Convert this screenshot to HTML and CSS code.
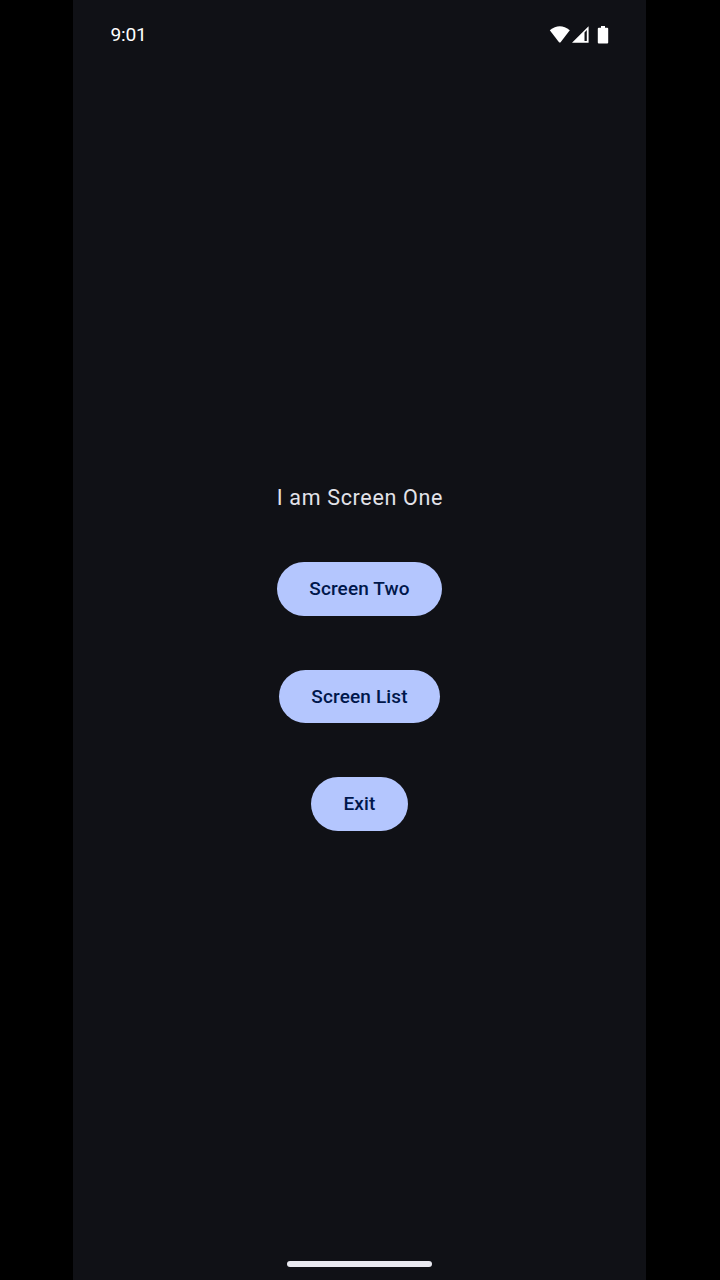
FILE: index.html
```html
<!DOCTYPE html>
<html lang="en">
<head>
  <meta charset="utf-8">
  <title>Screen One</title>
  <link rel="stylesheet" href="styles.css">
</head>
<body>
  <div class="screen">
    <header class="status-bar">
      <span class="clock">9:01</span>
      <svg class="status-icons" width="60" height="20" viewBox="0 0 60 20" fill="currentColor" aria-hidden="true">
        <path d="M-0.2 5.2 Q9.8 -2.8 19.8 5.2 L10.6 17.2 Q9.8 18 9 17.2 Z"/>
        <path fill-rule="evenodd" d="M38.6 1.3 V17.8 H22 Z M34.5 7.4 V16 H36.8 V5.1 Z"/>
        <path d="M51 1 h4 v1.7 h2.2 q1 0 1 1 v13.7 q0 1 -1 1 h-8.4 q-1 0 -1 -1 v-13.7 q0 -1 1 -1 h2.2 z"/>
      </svg>
    </header>
    <main class="content">
      <p class="title">I am Screen One</p>
      <button class="button">Screen Two</button>
      <button class="button">Screen List</button>
      <button class="button">Exit</button>
    </main>
    <footer class="navigation"><div class="home-handle"></div></footer>
  </div>
</body>
</html>
```
FILE: styles.css
```css
* {
  box-sizing: border-box;
}

body {
  margin: 0;
  background: #000;
  font-family: Roboto, sans-serif;
}

.screen {
  display: flex;
  flex-direction: column;
  width: 573px;
  height: 1280px;
  margin-left: 73px;
  background: #101116;
}

.status-bar {
  display: flex;
  justify-content: space-between;
  height: 70px;
  padding: 25px 36px 0 37.5px;
  color: #fff;
}

.status-icons {
  overflow: visible;
}

.clock {
  font-size: 19.2px;
  line-height: 20px;
  letter-spacing: -0.25px;
}

.content {
  display: flex;
  flex: 1;
  flex-direction: column;
  align-items: center;
  gap: 53.7px;
  padding-top: 411.8px;
}

.title {
  margin: 0 0 -5.4px;
  padding-left: 1px;
  color: #e2e2e9;
  font-size: 21.5px;
  line-height: 32.2px;
  letter-spacing: 0.67px;
}

.button {
  height: 53.7px;
  padding: 1.2px 32.3px 0;
  border: 0;
  border-radius: 27px;
  background: #b4c6fe;
  color: #00174b;
  font: 500 19px/26.8px Roboto, sans-serif;
  letter-spacing: 0.134px;
}

.navigation {
  display: flex;
  justify-content: center;
  height: 19px;
}

.home-handle {
  width: 145px;
  height: 5.6px;
  border-radius: 3px;
  background: #e9e9f0;
}
```
